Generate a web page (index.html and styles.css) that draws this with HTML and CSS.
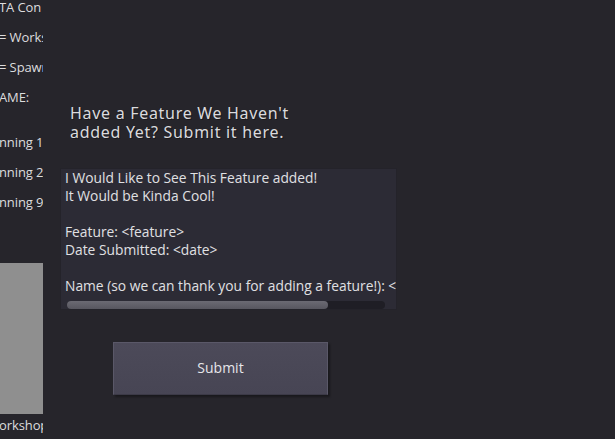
FILE: index.html
```html
<!DOCTYPE html>
<html>
<head>
<meta charset="utf-8">
<link rel="stylesheet" href="styles.css">
</head>
<body>
<div class="screen">
  <div class="side">
    <div class="side-label">TA Con</div>
    <div class="side-label">= Works</div>
    <div class="side-label">= Spawn</div>
    <div class="side-label">AME:</div>
    <div class="side-label gap">nning 1</div>
    <div class="side-label">nning 2</div>
    <div class="side-label">nning 9</div>
    <div class="thumb"></div>
    <div class="side-label foot">orkshop</div>
  </div>
  <div class="main">
    <h1 class="title">Have a Feature We Haven't<br>added Yet? Submit it here.</h1>
    <div class="textbox">
      <div class="textbox-text">I Would Like to See This Feature added!<br>It Would be Kinda Cool!<br><br>Feature: &lt;feature&gt;<br>Date Submitted: &lt;date&gt;<br><br>Name (so we can thank you for adding a feature!): &lt;</div>
      <div class="hscroll"><div class="grabber"></div></div>
    </div>
    <button class="submit">Submit</button>
  </div>
</div>
</body>
</html>
```
FILE: styles.css
```css
html, body {
  margin: 0;
  padding: 0;
  background: #26252b;
  width: 615px;
  height: 439px;
  overflow: hidden;
  font-family: "Open Sans", "Noto Sans", sans-serif;
  color: #e4e4e6;
}
.screen {
  display: flex;
  width: 615px;
  height: 439px;
}
.side {
  width: 43px;
  flex: none;
  overflow: hidden;
  display: flex;
  flex-direction: column;
  font-size: 13px;
  letter-spacing: -0.1px;
  white-space: nowrap;
}
.side-label {
  height: 30px;
  line-height: 14px;
  margin-left: -1px;
  color: #dcdcde;
  flex: none;
}
.gap { margin-top: 15px; }
.thumb {
  margin-top: 38px;
  height: 151px;
  background: #8f8f8f;
  flex: none;
}
.foot {
  margin-top: 4px;
}
.main {
  display: flex;
  flex-direction: column;
  align-items: flex-start;
  padding-left: 17px;
}
.title {
  margin: 104px 0 0 10px;
  font-family: "Noto Sans", "Open Sans", sans-serif;
  font-size: 16px;
  font-weight: normal;
  line-height: 19px;
  letter-spacing: 0.7px;
  color: #dadadd;
  text-shadow: 1px 1px 0 rgba(0,0,0,0.35);
}
.textbox {
  margin-top: 26px;
  width: 337px;
  height: 142px;
  box-sizing: border-box;
  background: #2c2b35;
  border: 1px solid #24232a;
  padding: 0 0 0 4px;
  display: flex;
  flex-direction: column;
}
.textbox-text {
  font-size: 13.8px;
  line-height: 18px;
  white-space: nowrap;
  overflow: hidden;
  color: #e0e0e3;
  height: 132px;
  flex: none;
}
.hscroll {
  margin: 0 11px 0 2px;
  height: 8px;
  border-radius: 4px;
  background: #1f1e25;
  flex: none;
}
.grabber {
  width: 261px;
  height: 8px;
  border-radius: 4px;
  background: linear-gradient(#6b6a73, #57565f);
}
.submit {
  margin: 32px 0 0 53px;
  width: 215px;
  height: 53px;
  background: linear-gradient(#4c4a59, #474554);
  border: 1px solid #5a5868;
  border-bottom-color: #3c3a47;
  box-shadow: 2px 2px 2px rgba(0,0,0,0.35);
  color: #e6e6ea;
  font-family: "Open Sans", "Noto Sans", sans-serif;
  font-size: 14px;
  padding: 0 0 2px 0;
}
```
